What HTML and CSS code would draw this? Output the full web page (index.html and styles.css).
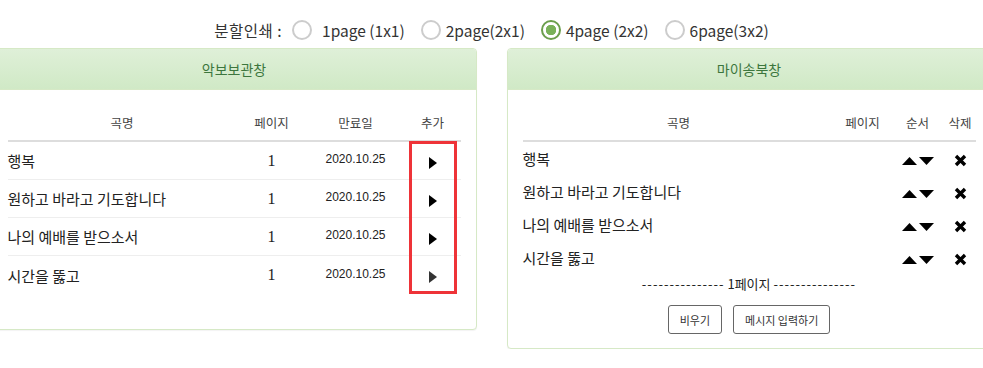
FILE: index.html
```html
<!DOCTYPE html>
<html>
<head>
<meta charset="utf-8" />
<link rel="stylesheet" href="styles.css">
</head>
<body>
<div class="print-options">
  <span class="print-label">분할인쇄 :</span>
  <label class="opt"><input type="radio" name="split"><span class="first">1page (1x1)</span></label>
  <label class="opt"><input type="radio" name="split"><span>2page(2x1)</span></label>
  <label class="opt"><input type="radio" name="split" checked><span>4page (2x2)</span></label>
  <label class="opt"><input type="radio" name="split"><span>6page(3x2)</span></label>
</div>

<div class="panels">
  <div class="panel">
    <div class="panel-heading">악보보관창</div>
    <div class="panel-body">
      <div class="table-wrap">
        <table class="store">
          <colgroup>
            <col style="width:229px"><col style="width:70px"><col style="width:98px"><col style="width:56px">
          </colgroup>
          <thead>
            <tr><th>곡명</th><th>페이지</th><th>만료일</th><th>추가</th></tr>
          </thead>
          <tbody>
            <tr>
              <td class="name">행복</td><td class="page">1</td><td class="date">2020.10.25</td>
              <td class="add"><svg width="8" height="12" viewBox="0 0 8 12"><polygon points="0,0 8,6 0,12" fill="#000"/></svg></td>
            </tr>
            <tr>
              <td class="name">원하고 바라고 기도합니다</td><td class="page">1</td><td class="date">2020.10.25</td>
              <td class="add"><svg width="8" height="12" viewBox="0 0 8 12"><polygon points="0,0 8,6 0,12" fill="#000"/></svg></td>
            </tr>
            <tr>
              <td class="name">나의 예배를 받으소서</td><td class="page">1</td><td class="date">2020.10.25</td>
              <td class="add"><svg width="8" height="12" viewBox="0 0 8 12"><polygon points="0,0 8,6 0,12" fill="#000"/></svg></td>
            </tr>
            <tr>
              <td class="name">시간을 뚫고</td><td class="page">1</td><td class="date">2020.10.25</td>
              <td class="add"><svg width="8" height="12" viewBox="0 0 8 12"><polygon points="0,0 8,6 0,12" fill="#333"/></svg></td>
            </tr>
          </tbody>
        </table>
        <div class="highlight"></div>
      </div>
    </div>
  </div>

  <div class="panel">
    <div class="panel-heading">마이송북창</div>
    <div class="panel-body songbook">
      <table class="book">
        <colgroup>
          <col style="width:312px"><col style="width:56px"><col style="width:54px"><col style="width:31px">
        </colgroup>
        <thead>
          <tr><th>곡명</th><th>페이지</th><th>순서</th><th>삭제</th></tr>
        </thead>
        <tbody>
          <tr>
            <td class="name">행복</td><td></td>
            <td class="order"><svg width="15" height="8" viewBox="0 0 15 8"><polygon points="0,8 7.5,0 15,8" fill="#000"/></svg><svg width="15" height="8" viewBox="0 0 15 8"><polygon points="0,0 15,0 7.5,8" fill="#000"/></svg></td>
            <td class="del"><svg width="13" height="13" viewBox="0 0 13 13"><path d="M2 2L11 11M11 2L2 11" stroke="#000" stroke-width="3.4"/></svg></td>
          </tr>
          <tr>
            <td class="name">원하고 바라고 기도합니다</td><td></td>
            <td class="order"><svg width="15" height="8" viewBox="0 0 15 8"><polygon points="0,8 7.5,0 15,8" fill="#000"/></svg><svg width="15" height="8" viewBox="0 0 15 8"><polygon points="0,0 15,0 7.5,8" fill="#000"/></svg></td>
            <td class="del"><svg width="13" height="13" viewBox="0 0 13 13"><path d="M2 2L11 11M11 2L2 11" stroke="#000" stroke-width="3.4"/></svg></td>
          </tr>
          <tr>
            <td class="name">나의 예배를 받으소서</td><td></td>
            <td class="order"><svg width="15" height="8" viewBox="0 0 15 8"><polygon points="0,8 7.5,0 15,8" fill="#000"/></svg><svg width="15" height="8" viewBox="0 0 15 8"><polygon points="0,0 15,0 7.5,8" fill="#000"/></svg></td>
            <td class="del"><svg width="13" height="13" viewBox="0 0 13 13"><path d="M2 2L11 11M11 2L2 11" stroke="#000" stroke-width="3.4"/></svg></td>
          </tr>
          <tr>
            <td class="name">시간을 뚫고</td><td></td>
            <td class="order"><svg width="15" height="8" viewBox="0 0 15 8"><polygon points="0,8 7.5,0 15,8" fill="#000"/></svg><svg width="15" height="8" viewBox="0 0 15 8"><polygon points="0,0 15,0 7.5,8" fill="#000"/></svg></td>
            <td class="del"><svg width="13" height="13" viewBox="0 0 13 13"><path d="M2 2L11 11M11 2L2 11" stroke="#000" stroke-width="3.4"/></svg></td>
          </tr>
        </tbody>
      </table>
      <div class="page-sep"><span class="dash">---------------</span> 1페이지 <span class="dash">---------------</span></div>
      <div class="actions">
        <button type="button">비우기</button>
        <button type="button">메시지 입력하기</button>
      </div>
    </div>
  </div>
</div>
</body>
</html>
```

FILE: styles.css
```css
* {
  box-sizing: border-box;
}
html, body {
  overflow: hidden;
}
body {
  margin: 0;
  font-family: "Noto Sans CJK KR", sans-serif;
  color: #333;
  background: #fff;
}

/* 분할인쇄 옵션 */
.print-options {
  display: flex;
  justify-content: center;
  align-items: center;
  height: 24px;
  margin-top: 18px;
  font-size: 15.5px;
}
.print-label {
  margin-right: 10px;
  letter-spacing: 0.5px;
}
.opt {
  display: flex;
  align-items: center;
  margin-right: 16px;
}
.opt:last-child {
  margin-right: 0;
}
.opt input {
  appearance: none;
  -webkit-appearance: none;
  width: 20px;
  height: 20px;
  margin: 0 5px 0 0;
  border: 2px solid #ccc;
  border-radius: 50%;
  background: #fff;
}
.opt input:checked {
  border-color: #6b9e4c;
  background: radial-gradient(circle, #79b159 0 5px, #fff 5.5px);
}
.opt .first {
  margin-left: 5px;
}

/* 패널 */
.panels {
  display: flex;
  justify-content: center;
  align-items: flex-start;
  gap: 30px;
  margin-top: 6px;
}
.panel {
  flex: 0 0 484px;
  border: 1px solid #d6e9c6;
  border-radius: 4px;
  background: #fff;
  box-shadow: 0 1px 1px rgba(0,0,0,.05);
}
.panel-heading {
  height: 41px;
  line-height: 40px;
  text-align: center;
  font-size: 14px;
  color: #3c763d;
  background: linear-gradient(#dff0d8, #d0e9c6);
  border-bottom: 1px solid #d6e9c6;
  border-radius: 3px 3px 0 0;
}
.panel-body {
  padding: 15px;
}
.songbook {
  padding-bottom: 14px;
}

table {
  width: 100%;
  table-layout: fixed;
  border-collapse: separate;
  border-spacing: 0;
}
th {
  height: 37px;
  padding: 0;
  font-size: 12.5px;
  font-weight: normal;
  color: #444;
  border-bottom: 2px solid #ddd;
}
td {
  padding: 0;
  font-size: 15px;
  color: #222;
  vertical-align: middle;
}

/* 악보보관창 */
.table-wrap {
  position: relative;
  margin-bottom: 20px;
}
.store tbody tr {
  height: 38px;
}
.store td {
  border-bottom: 1px solid #eee;
}
.store tbody tr:last-child td {
  border-bottom: 0;
}
.name {
  text-align: left;
}
.page {
  text-align: center;
  font-family: "Liberation Serif", serif;
  font-size: 16px;
}
.date {
  text-align: center;
  font-family: "Liberation Sans", sans-serif;
  font-size: 12px;
  padding-bottom: 3px;
}
.add {
  text-align: center;
}
.add svg {
  display: inline-block;
  vertical-align: middle;
}
.highlight {
  position: absolute;
  top: 36px;
  left: 401px;
  width: 48px;
  height: 153px;
  border: 3px solid #ee3338;
}

/* 마이송북창 */
.book tbody tr {
  height: 33px;
}
.order {
  text-align: center;
}
.order svg {
  margin: 0 1px;
  vertical-align: middle;
}
.del {
  text-align: center;
}
.del svg {
  vertical-align: middle;
}
.page-sep {
  height: 20px;
  line-height: 20px;
  text-align: center;
  font-size: 13px;
  color: #222;
}
.dash {
  letter-spacing: 1px;
}
.actions {
  display: flex;
  justify-content: center;
  gap: 11px;
  margin-top: 11px;
}
.actions button {
  height: 29px;
  padding: 0 11px;
  border: 1px solid #666;
  border-radius: 3px;
  background: #fff;
  font-family: "Noto Sans CJK KR", sans-serif;
  font-size: 11px;
  color: #333;
}
```
